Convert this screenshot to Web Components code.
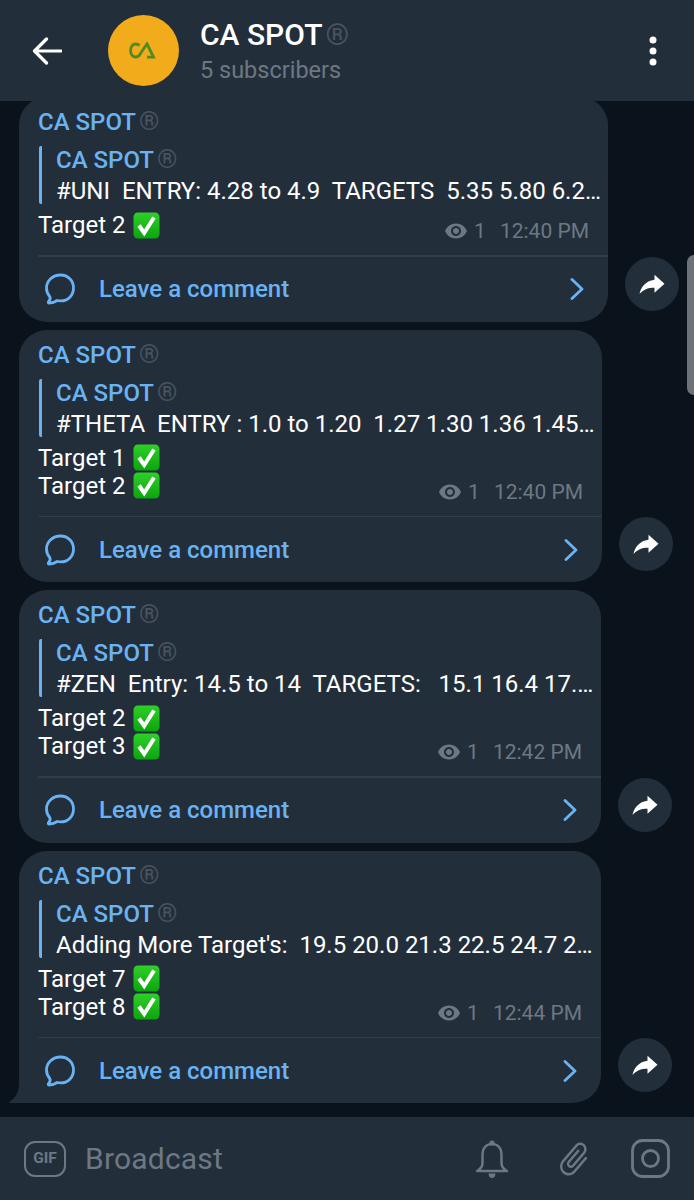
<!DOCTYPE html>
<html lang="en"><head><meta charset="utf-8"><title>CA SPOT</title>
<style>
html,body{margin:0;padding:0;background:#0a121c}
body{font-family:Roboto,"Noto Sans",sans-serif;width:694px;height:1200px;overflow:hidden}
</style></head><body>
<cs-app>
  <cs-header slot="header" title-text="CA SPOT" sub="5 subscribers"></cs-header>
  <cs-row share-gap="17">
    <cs-bubble width="589" quote="#UNI  ENTRY: 4.28 to 4.9  TARGETS  5.35 5.80 6.2…" time="12:40 PM"><cs-target>Target 2</cs-target></cs-bubble>
  </cs-row>
  <cs-row>
    <cs-bubble width="583" quote="#THETA  ENTRY : 1.0 to 1.20  1.27 1.30 1.36 1.45…" time="12:40 PM"><cs-target>Target 1</cs-target><cs-target>Target 2</cs-target></cs-bubble>
  </cs-row>
  <cs-row>
    <cs-bubble width="582" quote="#ZEN  Entry: 14.5 to 14  TARGETS:   15.1 16.4 17.…" time="12:42 PM"><cs-target>Target 2</cs-target><cs-target>Target 3</cs-target></cs-bubble>
  </cs-row>
  <cs-row>
    <cs-bubble width="582" tail quote="Adding More Target's:  19.5 20.0 21.3 22.5 24.7 2…" time="12:44 PM"><cs-target>Target 7</cs-target><cs-target>Target 8</cs-target></cs-bubble>
  </cs-row>
  <cs-composer slot="composer" placeholder="Broadcast"></cs-composer>
</cs-app>
<script>
const BG='#232e3b', MUTED='#6d7883', BLUE='#6ab3f3';
function def(name, html, observe){
  customElements.define(name, class extends HTMLElement{
    connectedCallback(){
      if(this.shadowRoot) return;
      const r=this.attachShadow({mode:'open'});
      r.innerHTML=typeof html==='function'?html(this):html;
    }
  });
}
def('cs-app',`<style>
:host{display:flex;flex-direction:column;width:694px;height:1200px;position:relative;overflow:hidden;background:#0a121c}
.chat{flex:1;min-height:0;overflow:hidden;display:flex;flex-direction:column;gap:8px;margin-top:-4px;padding-left:19px}
.bar{position:absolute;right:0;top:255px;width:7px;height:140px;background:#6d7178;border-radius:7px 0 0 7px}
</style>
<slot name="header"></slot>
<div class="chat"><slot></slot></div>
<div class="bar"></div>
<slot name="composer"></slot>`);

def('cs-reg',`<style>
:host{display:inline-block;font:400 26px/1 Roboto,sans-serif;color:#4a535e;vertical-align:baseline;margin-left:3px}
</style>®`);

def('cs-header',h=>`<style>
:host{display:flex;align-items:center;height:101px;background:${BG};flex:none;position:relative;z-index:2}
.back{width:30px;height:28px;margin-left:32px;flex:none}
.av{width:71px;height:71px;border-radius:50%;background:#f2ab1b;margin-left:46px;flex:none;display:flex;align-items:center;justify-content:center}
.txt{margin-left:21px;flex:1;display:flex;flex-direction:column}
.t{font:500 30px/36px Roboto,sans-serif;color:#fff;white-space:nowrap;margin-top:1px}
.s{font:400 23.5px/30px Roboto,sans-serif;color:${MUTED};margin-top:2px;}
.more{width:8px;height:30px;margin-right:37px;flex:none}
</style>
<svg class="back" viewBox="0 0 30 28"><path d="M29 14H3M14.5 2 2.5 14l12 12" fill="none" stroke="#fff" stroke-width="3.2" stroke-linecap="round" stroke-linejoin="round"/></svg>
<div class="av"><svg width="30" height="17" viewBox="0 0 30 17"><path d="M10.5 3.5C9.5 2.5 8.2 2 6.8 2 3.9 2 1.6 4.4 1.6 8.5s2.3 6.500 5.200 6.500c1.800 0 3-.9 4-2.500L18 1.800l6.500 13.400h-6.500" fill="none" stroke="#4f8a23" stroke-width="2.800"/></svg></div>
<div class="txt"><div class="t">${h.getAttribute('title-text')}<cs-reg style="font-size:30px"></cs-reg></div><div class="s">${h.getAttribute('sub')}</div></div>
<svg class="more" viewBox="0 0 8 30"><circle cx="4" cy="4" r="3.500" fill="#fff"/><circle cx="4" cy="15" r="3.500" fill="#fff"/><circle cx="4" cy="26" r="3.500" fill="#fff"/></svg>`);

def('cs-row',`<style>
:host{display:flex;align-items:flex-end;flex:none;gap:17px}
.sh{width:54px;height:54px;border-radius:50%;background:${BG};margin-bottom:11px;flex:none;display:flex;align-items:center;justify-content:center}
</style><slot></slot>
<div class="sh"><svg width="30" height="30" viewBox="0 0 24 24"><path d="M14 8.500V4.500l8 7.300-8 7.200v-4.100c-5.500 0-9 1.500-12 5.100 1-5.200 4.500-10.500 12-11.500z" fill="#fff"/></svg></div>`);

def('cs-target',`<style>
:host{display:flex;align-items:center;font:400 24px/28px Roboto,sans-serif;color:#fff;white-space:nowrap;gap:8px;height:28px}
</style><slot></slot>
<svg width="27" height="27" viewBox="0 0 27 27"><defs><linearGradient id="g" x1="0" y1="0" x2="0" y2="1"><stop offset="0" stop-color="#2fd02a"/><stop offset="1" stop-color="#0aa50d"/></linearGradient></defs><rect x=".5" y=".5" width="26" height="26" rx="4.500" fill="url(#g)"/><path d="M6 13.500l5.200 7.500L21 5.500" fill="none" stroke="#fff" stroke-width="4"/></svg>`);

def('cs-bubble',h=>`<style>
:host{display:block;flex:none;width:${h.getAttribute('width')}px;background:${BG};border-radius:28px;${h.hasAttribute('tail')?'border-bottom-left-radius:0;':''}position:relative;box-sizing:border-box;padding-top:11px}
.n{font:500 24px/28px Roboto,sans-serif;color:${BLUE};white-space:nowrap;margin-left:19px}
.q{margin:10px 0 0 20px;border-left:3px solid ${BLUE};border-radius:2px;padding-left:14px;height:58px;box-sizing:border-box}
.qn{font:500 24px/26px Roboto,sans-serif;color:${BLUE};white-space:nowrap}
.qt{font:400 24px/28px Roboto,sans-serif;color:#fff;white-space:pre;margin-top:4px}
.m{display:flex;align-items:flex-end;justify-content:space-between;margin:7px 19px 10px}
.tx{padding-bottom:6px}
.meta{display:flex;align-items:center;height:28px;font:400 21px/28px Roboto,sans-serif;color:${MUTED};white-space:nowrap}
.meta svg{margin-right:6px}
.meta b{font-weight:400;margin-right:14px}
.d{height:1.500px;background:#323d4a;margin-left:19px}
.c{display:flex;align-items:center;height:65px;font:500 24px/28px Roboto,sans-serif;color:${BLUE};position:relative}
.c .ic{margin-left:25px;flex:none}
.c span{margin-left:23px;flex:1}
.c .ch{margin-right:24px;flex:none}
.tail{position:absolute;left:-10px;bottom:0}
</style>
<div class="n">CA SPOT<cs-reg></cs-reg></div>
<div class="q"><div class="qn">CA SPOT<cs-reg></cs-reg></div><div class="qt">${h.getAttribute('quote')}</div></div>
<div class="m"><div class="tx"><slot></slot></div><div class="meta"><svg width="24" height="24" viewBox="0 0 24 24"><path fill="${MUTED}" fill-rule="evenodd" d="M12 4.500C7 4.500 2.730 7.610 1 12c1.730 4.390 6 7.500 11 7.500s9.270-3.110 11-7.500c-1.730-4.390-6-7.500-11-7.500zM12 17c-2.760 0-5-2.240-5-5s2.240-5 5-5 5 2.240 5 5-2.240 5-5 5zm0-8c-1.660 0-3 1.340-3 3s1.340 3 3 3 3-1.340 3-3-1.340-3-3-3z"/></svg><b>1</b>${h.getAttribute('time')}</div></div>
<div class="d"></div>
<div class="c"><svg class="ic" width="32" height="32" viewBox="0 0 32 32"><path d="M16.500 2C8.800 2 2.500 7.800 2.500 15c0 3.300 1.200 6.200 3.200 8.500.8 1 .6 3-1.300 5.400-.4.600 0 1.100.7 1.100 3.300-.1 6-1.100 8.100-2.500 1.100.3 2.200.4 3.300.4 7.700 0 13-5.700 13-12.900S24.200 2 16.500 2z" fill="none" stroke="${BLUE}" stroke-width="2.800" stroke-linejoin="round"/></svg><span>Leave a comment</span><svg class="ch" width="14" height="22" viewBox="0 0 14 22"><path d="M2 1.500l10 9.500-10 9.500" fill="none" stroke="${BLUE}" stroke-width="2.800" stroke-linecap="round" stroke-linejoin="round"/></svg></div>
${h.hasAttribute('tail')?`<svg class="tail" width="10" height="18" viewBox="0 0 10 18"><path d="M10 0v18H1c-1 0-1-.8-.4-1.300C5 14 9 10 10 0z" fill="${BG}"/></svg>`:''}`);

def('cs-composer',h=>`<style>
:host{display:flex;align-items:center;height:83px;background:${BG};flex:none;position:relative;z-index:2}
.gif{width:42px;height:36px;margin-left:24px;box-sizing:border-box;border:2.500px solid ${MUTED};border-radius:11px;display:flex;align-items:center;justify-content:center;font:700 15.500px/1 Roboto,sans-serif;color:${MUTED};flex:none}
.p{font:400 30px/36px Roboto,sans-serif;color:${MUTED};margin-left:19px;flex:1;letter-spacing:.2px}
svg{flex:none}
.bell{margin-right:45px}.clip{margin-right:38px}.cam{margin-right:24px}
</style>
<div class="gif">GIF</div><div class="p">${h.getAttribute('placeholder')}</div>
<svg class="bell" width="36" height="40" viewBox="0 0 36 40"><path d="M18 5c-6 0-9.500 4.500-9.500 11v8c0 3.500-2 6-5.500 8h30c-3.500-2-5.500-4.500-5.500-8v-8C27.500 9.500 24 5 18 5z" fill="none" stroke="${MUTED}" stroke-width="2.500" stroke-linejoin="round"/><circle cx="18" cy="4" r="2.600" fill="${MUTED}"/><path d="M14.500 34.500h7c0 2.500-1.500 4.500-3.500 4.500s-3.500-2-3.500-4.500z" fill="${MUTED}"/></svg>
<svg class="clip" width="38" height="40" viewBox="0 0 24 24" preserveAspectRatio="none"><g transform="rotate(42 12 12)"><path fill="${MUTED}" d="M16.500 6v11.500c0 2.210-1.790 4-4 4s-4-1.790-4-4V5c0-1.380 1.120-2.500 2.500-2.500s2.500 1.120 2.500 2.500v10.500c0 .55-.45 1-1 1s-1-.45-1-1V6H10v9.500c0 1.380 1.120 2.500 2.500 2.500s2.500-1.120 2.500-2.500V5c0-2.210-1.790-4-4-4S7 2.790 7 5v12.500c0 3.040 2.460 5.500 5.500 5.500s5.500-2.460 5.500-5.500V6h-1.500z"/></g></svg>
<svg class="cam" width="39" height="39" viewBox="0 0 39 39"><rect x="1.500" y="1.500" width="36" height="36" rx="10" fill="none" stroke="${MUTED}" stroke-width="2.800"/><circle cx="19.500" cy="19.500" r="8" fill="none" stroke="${MUTED}" stroke-width="2.800"/></svg>`);
</script>
</body></html>
